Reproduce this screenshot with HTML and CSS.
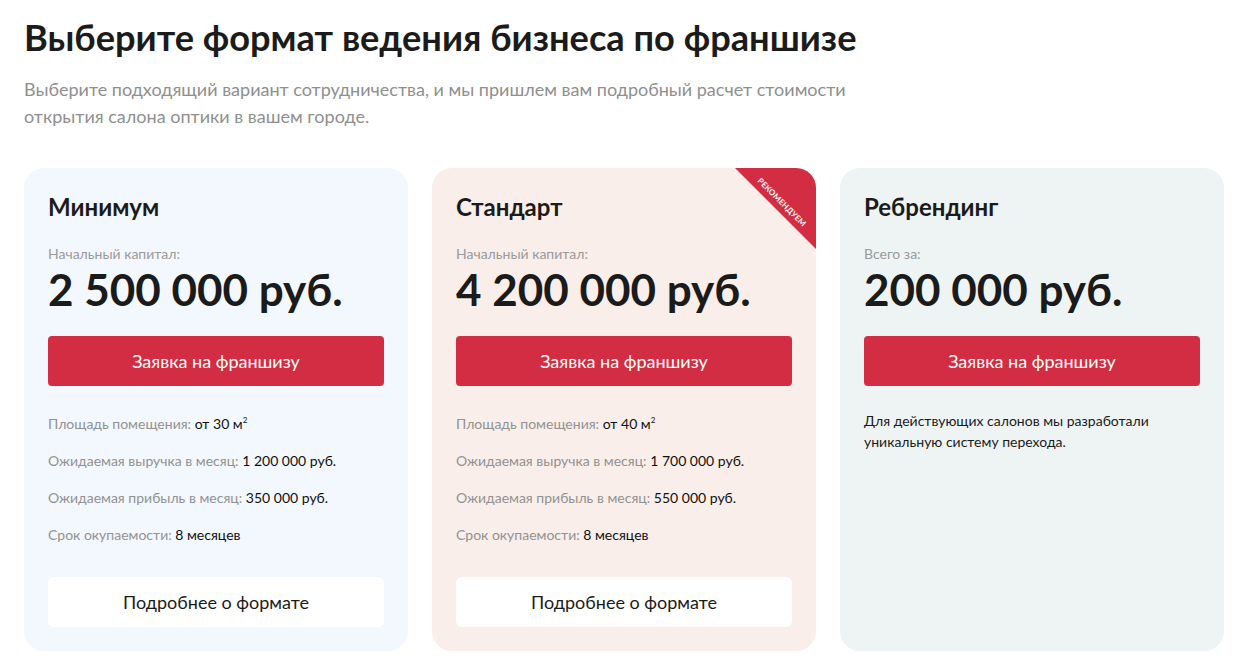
FILE: index.html
```html
<!DOCTYPE html>
<html lang="ru">
<head>
<meta charset="utf-8">
<title>Форматы франшизы</title>
<link rel="stylesheet" href="styles.css">
</head>
<body>
<section class="formats">
  <h1 class="formats-title">Выберите формат ведения бизнеса по франшизе</h1>
  <p class="formats-lead">Выберите подходящий вариант сотрудничества, и мы пришлем вам подробный расчет стоимости открытия салона оптики в вашем городе.</p>

  <div class="plans">
    <article class="plan plan--min">
      <h2 class="plan-name">Минимум</h2>
      <div class="plan-label">Начальный капитал:</div>
      <div class="plan-price">2 500 000 руб.</div>
      <button class="btn btn--primary" type="button">Заявка на франшизу</button>
      <ul class="plan-specs">
        <li>Площадь помещения: <b>от 30 м<sup>2</sup></b></li>
        <li>Ожидаемая выручка в месяц: <b>1 200 000 руб.</b></li>
        <li>Ожидаемая прибыль в месяц: <b>350 000 руб.</b></li>
        <li>Срок окупаемости: <b>8 месяцев</b></li>
      </ul>
      <button class="btn btn--light" type="button">Подробнее о формате</button>
    </article>

    <article class="plan plan--std">
      <div class="ribbon"><span>Рекомендуем</span></div>
      <h2 class="plan-name">Стандарт</h2>
      <div class="plan-label">Начальный капитал:</div>
      <div class="plan-price">4 200 000 руб.</div>
      <button class="btn btn--primary" type="button">Заявка на франшизу</button>
      <ul class="plan-specs">
        <li>Площадь помещения: <b>от 40 м<sup>2</sup></b></li>
        <li>Ожидаемая выручка в месяц: <b>1 700 000 руб.</b></li>
        <li>Ожидаемая прибыль в месяц: <b>550 000 руб.</b></li>
        <li>Срок окупаемости: <b>8 месяцев</b></li>
      </ul>
      <button class="btn btn--light" type="button">Подробнее о формате</button>
    </article>

    <article class="plan plan--rebrand">
      <h2 class="plan-name">Ребрендинг</h2>
      <div class="plan-label">Всего за:</div>
      <div class="plan-price">200 000 руб.</div>
      <button class="btn btn--primary" type="button">Заявка на франшизу</button>
      <p class="plan-note">Для действующих салонов мы разработали уникальную систему перехода.</p>
    </article>
  </div>
</section>
</body>
</html>
```
FILE: styles.css
```css
* {
  box-sizing: border-box;
}

html, body {
  margin: 0;
  padding: 0;
  background: #ffffff;
}

body {
  font-family: Lato, "Noto Sans", sans-serif;
  color: #1b1b1b;
}

.formats {
  padding: 14px 24px 20px;
}

.formats-title {
  margin: 0;
  font-size: 36.2px;
  line-height: 46px;
  font-weight: 700;
  color: #1b1b1b;
}

.formats-lead {
  margin: 16px 0 0;
  max-width: 840px;
  font-size: 18px;
  line-height: 27px;
  color: #8f8f8f;
}

.plans {
  display: grid;
  grid-template-columns: repeat(3, 384px);
  gap: 24px;
  margin-top: 38px;
}

.plan {
  position: relative;
  overflow: hidden;
  display: flex;
  flex-direction: column;
  height: 483px;
  padding: 24px 24px 24px;
  border-radius: 20px;
}

.plan--min {
  background: #f3f7fe;
}

.plan--std {
  background: #f9eee9;
}

.plan--rebrand {
  background: #edf4f3;
}

.plan-name {
  margin: 0;
  font-size: 24px;
  line-height: 30px;
  font-weight: 700;
  color: #1b1b1b;
}

.plan-label {
  margin-top: 23px;
  font-size: 14px;
  line-height: 18px;
  color: #9a9a9a;
}

.plan-price {
  margin-top: 0;
  font-size: 44px;
  line-height: 52px;
  font-weight: 700;
  color: #1b1b1b;
}

.btn {
  display: flex;
  align-items: center;
  justify-content: center;
  width: 100%;
  height: 50px;
  border: 0;
  font-family: inherit;
  font-size: 18px;
  cursor: pointer;
}

.btn--primary {
  margin-top: 21px;
  background: #d22d42;
  color: #ffffff;
  border-radius: 4px;
}

.btn--light {
  margin-top: auto;
  background: #ffffff;
  color: #1b1b1b;
  border-radius: 6px;
}

.plan-specs {
  list-style: none;
  margin: 29px 0 0;
  padding: 0;
  display: flex;
  flex-direction: column;
  gap: 19px;
}

.plan-specs li {
  font-size: 14px;
  line-height: 18px;
  color: #929292;
}

.plan-specs b {
  font-weight: 400;
  color: #111111;
}

.plan-specs sup {
  font-size: 8px;
  line-height: 0;
  vertical-align: 6px;
}

.plan-note {
  margin: 24px 0 0;
  font-size: 14px;
  line-height: 21px;
  color: #1b1b1b;
}

/* corner ribbon on the recommended plan */
.ribbon {
  position: absolute;
  top: 0;
  right: 0;
  width: 81px;
  height: 81px;
  background: #d22d42;
  clip-path: polygon(0 0, 100% 0, 100% 100%);
}

.ribbon span {
  position: absolute;
  left: 47px;
  top: 34px;
  transform: translate(-50%, -50%) rotate(45deg);
  font-size: 8px;
  line-height: 10px;
  font-weight: 700;
  letter-spacing: 0.1px;
  text-transform: uppercase;
  white-space: nowrap;
  color: #ffffff;
}
```
